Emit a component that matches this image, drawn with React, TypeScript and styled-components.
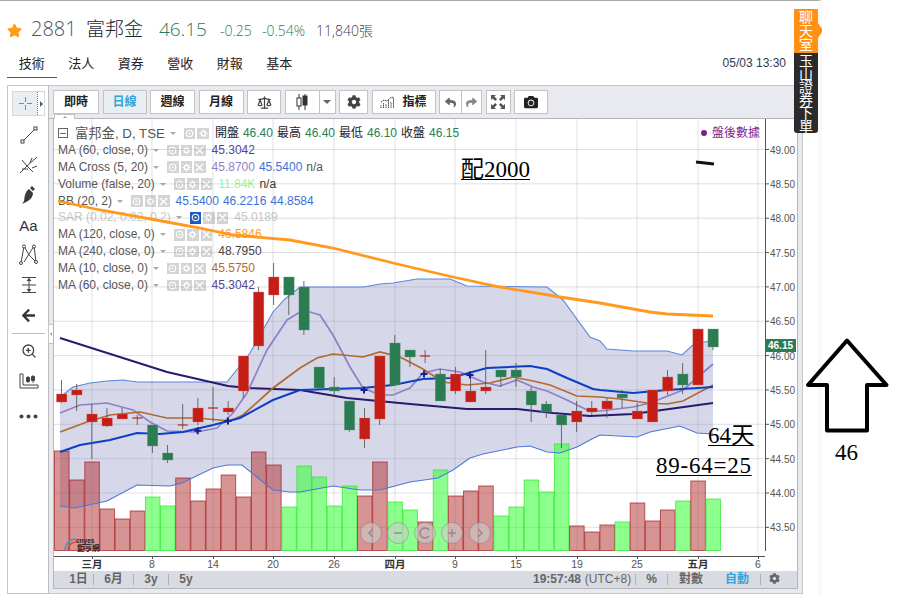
import React from "react";
import styled, { createGlobalStyle } from "styled-components";
import { FaCamera, FaCog, FaReply, FaShare, FaArrowLeft, FaStar } from "react-icons/fa";
import { ZoomIn, Scale } from "lucide-react";

const Global = createGlobalStyle`
  html, body { margin: 0; padding: 0; background: #fff; }
  #root { width: 900px; height: 600px; overflow: hidden; }
  * { box-sizing: border-box; }
`;

const SANS = `"Liberation Sans", "Noto Sans CJK TC", sans-serif`;
const HEAD = `"Open Sans", "Noto Sans CJK TC", sans-serif`;
const SERIF = `"Liberation Serif", "Noto Sans CJK TC", serif`;

const Root = styled.div`
  position: relative;
  width: 900px;
  height: 600px;
  overflow: hidden;
  background: #fff;
`;
const Page = styled.div`
  width: 822px;
  height: 594px;
  border-top: 1px solid #a9a9a9;
  border-right: 4px solid #f9f9f9;
  padding-left: 7px;
  font-family: ${SANS};
`;
const Quote = styled.div`
  display: flex;
  align-items: baseline;
  height: 37px;
  padding-top: 16px;
  font-family: ${HEAD};
  color: #3a4356;
  white-space: nowrap;
`;
const Star = styled.span`
  color: #ff9c1a;
  font-size: 15px;
  width: 24px;
  line-height: 20px;
  svg { display: block; transform: translateY(2px); }
`;
const Code = styled.span`
  font-size: 20px;
  font-weight: 300;
  line-height: 24px;
  color: #4a5568;
  width: 55px;
`;
const Name = styled.span`
  font-size: 19px;
  line-height: 24px;
  color: #1c2333;
  width: 73px;
  font-weight: 300;
`;
const Last = styled.span`
  font-size: 19px;
  line-height: 24px;
  color: #2b7a5c;
  width: 61px;
  font-weight: 300;
`;
const Small = styled.span<{ $w: number; $c?: string }>`
  font-size: 14px;
  color: ${(p) => p.$c || "#2b7a5c"};
  width: ${(p) => p.$w}px;
  font-weight: 300;
`;
const NavRow = styled.div`
  display: flex;
  align-items: flex-start;
  height: 47px;
  padding-top: 13px;
`;
const NavItem = styled.div<{ $active?: boolean }>`
  width: 49.5px;
  height: 27px;
  text-align: center;
  font: 400 13px/25px ${HEAD};
  color: #222;
  border-bottom: ${(p) => (p.$active ? "1px solid #c8232c" : "none")};
`;
const Stamp = styled.div`
  margin-left: auto;
  margin-right: 32px;
  font: 12px/25px ${SANS};
  color: #2f3b52;
`;
const Frame = styled.div`
  display: flex;
  width: 796px;
  height: 509px;
  border: 1px solid #c6c6c6;
`;
const LeftBar = styled.div`
  width: 41px;
  flex: none;
  border-right: 1px solid #bdbdbd;
  padding: 5px 3px 0 4px;
  display: flex;
  flex-direction: column;
  align-items: center;
  background: #fff;
`;
const CrossBtn = styled.div`
  width: 33px;
  height: 25px;
  flex: none;
  display: flex;
  margin-bottom: 4px;
  background: #e9eef3;
  border: 1px solid #d4d8dc;
`;
const CrossIcon = styled.div`
  flex: 1;
  display: flex;
  align-items: center;
  justify-content: center;
`;
const CrossSide = styled.div`
  width: 7px;
  border-left: 1px dotted #777;
  background: #fff;
  display: flex;
  align-items: center;
  justify-content: center;
  &::after {
    content: "";
    border-left: 3px solid #555;
    border-top: 3px solid transparent;
    border-bottom: 3px solid transparent;
  }
`;
const Tool = styled.div<{ $mt?: number }>`
  width: 32px;
  height: 30px;
  flex: none;
  margin-top: ${(p) => p.$mt || 0}px;
  display: flex;
  align-items: center;
  justify-content: center;
  color: #3c3c3c;
`;
const ToolText = styled.span`
  font: 15px ${SANS};
  color: #333;
`;
const ToolSep = styled.div`
  width: 33px;
  height: 1px;
  flex: none;
  margin-top: 3px;
  margin-bottom: 2px;
  background: #bdbdbd;
`;
const Right = styled.div`
  flex: 1;
  min-width: 0;
  display: flex;
  flex-direction: column;
  background: #e8eaef;
`;
const TopBar = styled.div`
  height: 33px;
  flex: none;
  border-bottom: 1px solid #b4b6bb;
  padding: 4px 0 0 4px;
  display: flex;
  gap: 3.5px;
`;
const Btn = styled.div<{ $w: number; $active?: boolean; $ml?: number }>`
  width: ${(p) => p.$w}px;
  height: 24px;
  flex: none;
  margin-left: ${(p) => p.$ml || 0}px;
  display: flex;
  align-items: center;
  justify-content: center;
  gap: 6px;
  background: ${(p) => (p.$active ? "#e9eef2" : "#fff")};
  border: 1px solid #c3c3c3;
  font: 700 12px/1 ${SANS};
  color: ${(p) => (p.$active ? "#2ea6dc" : "#222")};
`;
const Split = styled.div`
  display: flex;
  flex: none;
`;
const SplitPart = styled(Btn)<{ $left?: boolean }>`
  border-right: ${(p) => (p.$left ? "none" : "1px solid #c3c3c3")};
`;
const Caret = styled.span`
  border-top: 4px solid #666;
  border-left: 4px solid transparent;
  border-right: 4px solid transparent;
`;
const Body = styled.div`
  flex: 1;
  display: flex;
  min-height: 0;
`;
const Gutter = styled.div`
  position: relative;
  width: 4px;
  flex: none;
`;
const Handle = styled.div`
  position: absolute;
  left: -1px;
  top: 205px;
  width: 5px;
  height: 20px;
  background: #fff;
  border: 1px solid #c6c6c6;
  border-right: none;
  display: flex;
  align-items: center;
  justify-content: center;
  &::after {
    content: "";
    border-right: 2px solid #999;
    border-top: 2px solid transparent;
    border-bottom: 2px solid transparent;
  }
`;
const ChartCol = styled.div`
  width: 745px;
  flex: none;
  display: flex;
  flex-direction: column;
  border-left: 1px solid #b4b6bb;
  border-right: 1px solid #b4b6bb;
  margin-bottom: 4px;
  border-bottom: 1px solid #b4b6bb;
`;
const Chart = styled.div`
  position: relative;
  width: 743px;
  height: 452px;
  flex: none;
  background: #fff;
`;
const UpTab = styled.div`
  position: absolute;
  left: 0;
  top: -5px;
  width: 21px;
  height: 5px;
  background: #fff;
  border: 1px solid #c3c3c3;
  border-bottom: none;
  display: flex;
  justify-content: center;
  align-items: center;
  &::after {
    content: "";
    border-bottom: 2px solid #999;
    border-left: 2px solid transparent;
    border-right: 2px solid transparent;
  }
`;
const ChartSvg = styled.svg`
  position: absolute;
  inset: 0;
`;
const Legend = styled.div`
  position: absolute;
  left: 4px;
  top: 6px;
  font: 12px/17px ${SANS};
  color: #555;
`;
const Row = styled.div<{ $faded?: boolean }>`
  display: flex;
  align-items: center;
  height: 16.9px;
  white-space: nowrap;
  color: ${(p) => (p.$faded ? "#c8c8c8" : "#555")};
`;
const Collapse = styled.span`
  width: 10px;
  height: 10px;
  border: 1px solid #666;
  margin-right: 7px;
  display: flex;
  align-items: center;
  justify-content: center;
  &::after { content: ""; width: 6px; height: 1px; background: #666; }
`;
const TitleText = styled.span`
  font-size: 13.3px;
  color: #555;
`;
const RowCaret = styled.span`
  border-top: 3px solid #aaa;
  border-left: 3px solid transparent;
  border-right: 3px solid transparent;
  margin: 0 6px 0 5px;
`;
const Boxes = styled.span`
  display: flex;
  gap: 2px;
  margin-left: 2px;
  margin-right: 6px;
`;
const Box = styled.span<{ $on?: boolean }>`
  width: 11.5px;
  height: 11.5px;
  display: flex;
  align-items: center;
  justify-content: center;
  background: ${(p) => (p.$on ? "#1a5bc4" : "#d4d4d4")};
`;
const Val = styled.span<{ $c?: string }>`
  color: ${(p) => p.$c || "inherit"};
  margin-right: 4px;
`;
const OhlcLabel = styled.span`
  color: #222;
  margin-right: 4px;
`;
const AfterHours = styled.div`
  position: absolute;
  right: 37px;
  top: 7px;
  font: 12px/15px ${SANS};
  color: #7f1f8f;
  &::before {
    content: "";
    display: inline-block;
    width: 6px;
    height: 6px;
    border-radius: 50%;
    background: #7f1f8f;
    margin-right: 5px;
    vertical-align: 1px;
  }
`;
const BottomBar = styled.div`
  height: 17px;
  flex: none;
  background: #d8dbe1;
  display: flex;
  align-items: center;
  justify-content: space-between;
  font: 700 12px/17px ${SANS};
  color: #666;
`;
const BarGroup = styled.div`
  display: flex;
  align-items: center;
  padding: 0 10px;
`;
const BarItem = styled.span<{ $w?: number; $c?: string; $weight?: number }>`
  width: ${(p) => (p.$w ? p.$w + "px" : "auto")};
  text-align: center;
  color: ${(p) => p.$c || "#666"};
  font-weight: ${(p) => p.$weight || 700};
`;
const BarSep = styled.span`
  width: 1px;
  height: 11px;
  background: #aeb1b7;
`;
const SideTabs = styled.div`
  position: absolute;
  left: 794px;
  top: 9px;
  width: 24px;
  color: #fff;
  font: 14px/14px "Noto Sans CJK TC", sans-serif;
`;
const TabOrange = styled.div`
  position: relative;
  width: 24px;
  height: 44px;
  background: #ff9214;
  writing-mode: vertical-rl;
  display: flex;
  align-items: center;
  justify-content: center;
  &::after {
    content: "";
    position: absolute;
    left: 24px;
    top: 14px;
    width: 4px;
    height: 15px;
    background: #ff9214;
    clip-path: polygon(0 0, 100% 40%, 100% 60%, 0 100%);
  }
`;
const TabDark = styled.div`
  width: 24px;
  height: 80px;
  background: #2b2b2b;
  border-radius: 0 0 3px 3px;
  writing-mode: vertical-rl;
  letter-spacing: -1.1px;
  display: flex;
  align-items: center;
  justify-content: center;
`;
const Note = styled.div<{ $x: number; $y: number; $under?: boolean; $ls?: number }>`
  position: absolute;
  left: ${(p) => p.$x}px;
  top: ${(p) => p.$y}px;
  font: 23px/26px ${SERIF};
  color: #000;
  white-space: nowrap;
  letter-spacing: ${(p) => p.$ls || 0}px;
  text-decoration: ${(p) => (p.$under ? "underline" : "none")};
  text-decoration-thickness: 1px;
  text-underline-offset: 2px;
`;
const Arrow = styled.svg`
  position: absolute;
  left: 800px;
  top: 334px;
`;

/* ---------- data ---------- */
const step = 15.15;
const yPrice = (p: number) => 149.5 + (49 - p) * 68.7;
const vols: [number, "r" | "g"][] = [
  [451, "r"], [480, "r"], [462, "r"], [509, "r"], [519, "r"], [511, "r"], [497, "g"], [506, "g"], [478, "r"], [501, "r"], [489, "r"],
  [475, "r"], [497, "r"], [452, "r"], [465, "r"], [507, "g"], [466, "g"], [477, "g"], [506, "g"], [486, "g"], [496, "r"], [462, "r"],
  [502, "g"], [510, "g"], [522, "r"], [470, "g"], [496, "r"], [491, "r"], [486, "r"], [516, "g"], [507, "g"], [480, "g"], [492, "g"],
  [444, "g"], [526, "r"], [532, "r"], [525, "r"], [522, "g"], [503, "r"], [521, "r"], [510, "r"], [501, "g"], [481, "r"], [499, "g"],
];
const candles: [number, number, number, number, "r" | "g"][] = [
  [394, 402, 380, 403, "r"], [390, 395, 384, 411, "r"], [414, 422, 404, 459, "r"], [418, 426, 408, 427, "r"], [414, 419, 408, 419, "r"],
  [418, 418.6, 415, 425, "r"], [425, 446, 425, 453, "g"], [453, 460, 445, 463, "g"], [425, 425.6, 404, 429, "r"], [408, 422, 398, 425, "r"],
  [408, 408.6, 387, 422, "r"], [408, 412, 401, 415, "r"], [356, 391, 356, 398, "r"], [292, 346, 287, 350, "r"], [277, 295, 263, 305, "r"],
  [277, 295, 277, 315, "g"], [287, 330, 281, 335, "g"], [367, 388, 367, 390, "g"], [387, 391, 377, 397, "g"], [401, 430, 401, 432, "g"],
  [418, 439, 408, 448, "r"], [356, 419, 356, 425, "r"], [343, 385, 335, 385, "g"], [350, 357, 350, 367, "g"], [356, 356.6, 350, 363, "r"],
  [374, 401, 369, 401, "g"], [374, 391, 367, 394, "r"], [391, 402, 377, 402, "r"], [387, 391, 350, 394, "r"], [370, 377, 370, 387, "g"],
  [370, 377, 363, 387, "g"], [391, 405, 387, 422, "g"], [404, 412, 401, 418, "g"], [415, 425, 415, 448, "g"], [411, 422, 401, 432, "r"],
  [408, 412, 401, 415, "r"], [401, 409, 398, 418, "r"], [394, 398, 390, 408, "g"], [411, 419, 403, 419, "r"], [390, 422, 390, 422, "r"],
  [377, 391, 370, 395, "r"], [374, 385, 363, 394, "g"], [329, 385, 329, 385, "r"], [329, 347, 329, 350, "g"],
];
const upper = "60,397 73,387 90,383 107,381 123,380 137,382 167,382 227,382 250,353 273,312 285,299 300,287 363,287 380,284 393,283 417,279 450,279 467,286 547,287 563,300 590,337 600,341 607,349 633,351 667,351 682,355 695,343 713,341";
const lower = "713,434 697,433 680,426 650,432 637,437 600,435 590,440 577,447 560,453 547,452 530,446 517,447 483,454 470,458 453,470 438,478 410,482 380,490 360,490 333,486 300,492 290,492 273,490 242,465 227,465 213,468 182,483 170,486 137,485 107,501 75,508 60,506";
const navy = "60,338 167,372 228,386 248,388 300,390 347,398 410,404 467,409 517,409 553,413 590,416 633,414 713,403";
const blue = "60,452 80,445 110,440 137,433 160,434 183,432 213,425 240,418 273,400 300,390 363,388 393,385 423,379 450,378 487,368 530,366 547,369 567,378 593,389 600,390 633,393 667,390 713,387";
const brown = "60,432 87,422 110,415 140,412 167,418 197,418 230,421 243,415 273,388 300,368 317,358 333,354 363,357 380,352 400,357 423,369 443,382 467,385 490,383 513,377 533,381 550,385 577,396 600,397 620,399 647,403 667,404 683,401 713,385";
const lilac = "60,413 80,405 107,403 133,410 150,422 167,431 197,432 217,428 233,413 247,393 267,350 287,320 300,312 310,312 320,315 333,335 350,367 363,388 380,395 393,395 410,388 423,373 440,369 460,372 483,382 500,386 517,380 533,387 547,391 567,400 587,410 600,411 633,407 650,403 683,390 713,364";
const orange = "58,201 100,210 167,222 200,228 233,235 290,240 333,248 393,263 453,277 500,287 560,297 600,303 633,309 650,312 667,314 713,316";

const xTicks: [number, string, boolean][] = [
  [92, "三月", true], [152, "8", false], [213, "14", false], [273, "20", false], [334, "26", false], [395, "四月", true],
  [455, "9", false], [516, "15", false], [577, "19", false], [637, "25", false], [698, "五月", true], [758, "6", false],
];
const prices = [49, 48.5, 48, 47.5, 47, 46.5, 46, 45.5, 45, 44.5, 44, 43.5];
const sarMarks: [number, number][] = [[197.7, 430.7], [228, 421], [364, 390], [424, 374], [470, 375]];

const RED = "#c41e16";
const GREEN = "#2b7c50";

const PriceChart = () => (
  <ChartSvg width={743} height={452} viewBox="54 119 743 452">
    <polygon points={`${upper} ${lower}`} fill="#d6d8ea" />
    {xTicks.map(([x]) => (
      <line key={x} x1={x} x2={x} y1={119} y2={551} stroke="#7c7c92" strokeOpacity={0.24} />
    ))}
    {prices.map((p) => (
      <line key={p} x1={54} x2={765} y1={yPrice(p)} y2={yPrice(p)} stroke="#7c7c92" strokeOpacity={0.24} />
    ))}
    {vols.map(([top, c], i) => (
      <rect
        key={i}
        x={54 + step * i + 0.5}
        y={top}
        width={step - 0.6}
        height={550.5 - top}
        fill={c === "r" ? "rgba(180,60,60,.55)" : "rgba(40,255,40,.53)"}
        stroke={c === "r" ? "rgba(165,30,30,.7)" : "rgba(30,230,30,.65)"}
      />
    ))}
    <polyline points={upper} fill="none" stroke="#5b86dc" strokeWidth={1.1} />
    <polyline points={lower} fill="none" stroke="#4d78d8" strokeWidth={1.1} />
    <polyline points={navy} fill="none" stroke="#2a1a6e" strokeWidth={2} />
    <polyline points={lilac} fill="none" stroke="#8f7fc6" strokeWidth={1.7} />
    <polyline points={brown} fill="none" stroke="#b06a30" strokeWidth={1.7} />
    <polyline points={blue} fill="none" stroke="#0c3fc4" strokeWidth={2} />
    <polyline points={orange} fill="none" stroke="#ff9a1f" strokeWidth={2.8} />
    {candles.map(([t, b, wt, wb, c], i) => {
      const cx = 61.5 + step * i;
      const doji = b - t < 1;
      return (
        <g key={i}>
          <line x1={cx} x2={cx} y1={wt} y2={wb} stroke="#555" strokeOpacity={0.85} />
          {doji ? (
            <line x1={cx - 5} x2={cx + 5} y1={t} y2={t} stroke={RED} strokeWidth={1.2} />
          ) : (
            <rect x={cx - 5} y={t} width={10.4} height={b - t} fill={c === "r" ? RED : GREEN} stroke={c === "r" ? "#d8706a" : "#6aa285"} strokeOpacity={0.6} strokeWidth={0.6} />
          )}
        </g>
      );
    })}
    {sarMarks.map(([x, y]) => (
      <path key={x} d={`M${x - 3.5} ${y}H${x + 3.5}M${x} ${y - 3.5}V${y + 3.5}`} stroke="#1c1f8a" strokeWidth={2} />
    ))}
    <path d="M696 162L714 164" stroke="#111" strokeWidth={3.2} />

    {/* axes */}
    <line x1={765.5} x2={765.5} y1={119} y2={551} stroke="#555" />
    <line x1={54} x2={765} y1={556.5} y2={556.5} stroke="#555" />
    {prices.map((p) => (
      <g key={p}>
        <line x1={765} x2={769} y1={yPrice(p)} y2={yPrice(p)} stroke="#555" />
        <text x={770} y={yPrice(p) + 4} fontSize={10} fontFamily={SANS} fill="#555">{p.toFixed(2)}</text>
      </g>
    ))}
    {xTicks.map(([x, t, b]) => (
      <g key={x}>
        <line x1={x + 0.5} x2={x + 0.5} y1={556} y2={559} stroke="#555" />
        <text x={x} y={568} fontSize={10.5} fontWeight={b ? 700 : 400} fontFamily={SANS} fill={b ? "#333" : "#555"} textAnchor="middle">{t}</text>
      </g>
    ))}
    <rect x={765} y={339} width={31} height={13} fill={GREEN} />
    <text x={780.5} y={349} fontSize={10} fontWeight={700} fontFamily={SANS} fill="#fff" textAnchor="middle">46.15</text>

    {/* zoom controls */}
    {[371, 398, 425, 452, 480].map((x) => (
      <circle key={x} cx={x} cy={533} r={10.5} fill="rgba(205,205,205,.6)" stroke="rgba(120,120,120,.45)" />
    ))}
    <g fill="none" stroke="#8a8a8a" strokeWidth={1.4}>
      <path d="M373 529l-4 4 4 4" />
      <path d="M394 533h8" />
      <path d="M429 530a5 5 0 1 0 0 6" />
      <path d="M448 533h8M452 529v8" />
      <path d="M478 529l4 4-4 4" />
    </g>

    {/* logo */}
    <g fill="none" strokeWidth={1.5}>
      <path d="M65 550a11 11 0 0 1 11-11" stroke="#3a9ac8" />
      <path d="M68 550a8 8 0 0 1 8-8" stroke="#e24a2a" />
    </g>
    <text x={76} y={543} fontSize={6.5} fontWeight={700} fontFamily={SANS} fill="#222">cnyes</text>
    <text x={77} y={550.5} fontSize={7.5} fontWeight={700} fontFamily={SANS} fill="#222">鉅亨網</text>
  </ChartSvg>
);

const Eye = ({ c = "#fff" }: { c?: string }) => (
  <svg width="9" height="9" viewBox="0 0 10 10"><circle cx="5" cy="5" r="3.6" fill="none" stroke={c} strokeWidth="1.3" /><circle cx="5" cy="5" r="1.2" fill={c} /></svg>
);
const Cog = () => (
  <svg width="9" height="9" viewBox="0 0 10 10"><circle cx="5" cy="5" r="2.4" fill="none" stroke="#fff" strokeWidth="1.6" /><path d="M5 .5v1.6M5 7.9v1.6M.5 5h1.6M7.9 5h1.6M1.8 1.8l1.1 1.1M7.1 7.1l1.1 1.1M1.8 8.2l1.1-1.1M7.1 2.9l1.1-1.1" stroke="#fff" strokeWidth="1.1" /></svg>
);
const Cross = () => (
  <svg width="9" height="9" viewBox="0 0 10 10"><path d="M1 1l8 8M9 1l-8 8" stroke="#fff" strokeWidth="1.5" /></svg>
);

type Study = { name: string; vals: [string, string?][]; faded?: boolean; on?: boolean };
const studies: Study[] = [
  { name: "MA (60, close, 0)", vals: [["45.3042", "#4f4295"]] },
  { name: "MA Cross (5, 20)", vals: [["45.8700", "#8f7fc6"], ["45.5400", "#3a73d8"], ["n/a", "#555"]] },
  { name: "Volume (false, 20)", vals: [["11.84K", "#8cff8c"], ["n/a", "#333"]] },
  { name: "BB (20, 2)", vals: [["45.5400", "#3a73d8"], ["46.2216", "#3a73d8"], ["44.8584", "#3a73d8"]] },
  { name: "SAR (0.02, 0.02, 0.2)", vals: [["45.0189", "#c8c8c8"]], faded: true, on: true },
  { name: "MA (120, close, 0)", vals: [["46.5846", "#ff9a1f"]] },
  { name: "MA (240, close, 0)", vals: [["48.7950", "#444"]] },
  { name: "MA (10, close, 0)", vals: [["45.5750", "#b8692e"]] },
  { name: "MA (60, close, 0)", vals: [["45.3042", "#4f4295"]] },
];

const ChartLegend = () => (
  <Legend>
    <Row>
      <Collapse />
      <TitleText>富邦金, D, TSE</TitleText>
      <RowCaret />
      <Boxes>
        <Box><Eye /></Box>
        <Box><Cog /></Box>
      </Boxes>
      <OhlcLabel>開盤</OhlcLabel><Val $c="#2b8050">46.40</Val>
      <OhlcLabel>最高</OhlcLabel><Val $c="#2b8050">46.40</Val>
      <OhlcLabel>最低</OhlcLabel><Val $c="#2b8050">46.10</Val>
      <OhlcLabel>收盤</OhlcLabel><Val $c="#2b8050">46.15</Val>
    </Row>
    {studies.map((s, i) => (
      <Row key={i} $faded={s.faded}>
        <span>{s.name}</span>
        <RowCaret />
        <Boxes>
          <Box $on={s.on}><Eye /></Box>
          <Box><Cog /></Box>
          <Box><Cross /></Box>
        </Boxes>
        {s.vals.map(([v, c], j) => (
          <Val key={j} $c={c}>{v}</Val>
        ))}
      </Row>
    ))}
  </Legend>
);

const ToolBarIcons = {
  Candle: () => (
    <svg width="14" height="18" viewBox="0 0 14 18"><path d="M4 1v16M10 1v16" stroke="#333" /><rect x="2" y="5" width="4" height="8" fill="#fff" stroke="#333" /><rect x="8" y="3" width="4" height="9" fill="#333" stroke="#333" /></svg>
  ),
  Bars: () => (
    <svg width="16" height="13" viewBox="0 0 16 13" stroke="#444" fill="none" strokeWidth="1"><path d="M1 12V9M3.5 12V7M6 12V8M8.5 12V4M11 12V6M13.5 12V2M1 6l3-2 3 1 3-3 4-1" strokeDasharray="1.5 .6" /></svg>
  ),
  Full: () => (
    <svg width="16" height="16" viewBox="0 0 16 16" fill="#555"><path d="M1 1h5L4.4 2.6 7 5.2 5.2 7 2.6 4.4 1 6zM15 1v5l-1.6-1.6L10.8 7 9 5.2l2.6-2.6L10 1zM1 15v-5l1.6 1.6L5.2 9 7 10.8l-2.6 2.6L6 15zM15 15h-5l1.6-1.6L9 10.8 10.8 9l2.6 2.6L15 10z" /></svg>
  ),
};

export default function App() {
  return (
    <Root>
      <Global />
      <Page>
        <Quote>
          <Star><FaStar size={15} /></Star>
          <Code>2881</Code>
          <Name>富邦金</Name>
          <Last>46.15</Last>
          <Small $w={42}>-0.25</Small>
          <Small $w={54}>-0.54%</Small>
          <Small $w={70} $c="#3a4356">11,840張</Small>
        </Quote>
        <NavRow>
          <NavItem $active>技術</NavItem>
          <NavItem>法人</NavItem>
          <NavItem>資券</NavItem>
          <NavItem>營收</NavItem>
          <NavItem>財報</NavItem>
          <NavItem>基本</NavItem>
          <Stamp>05/03 13:30</Stamp>
        </NavRow>
        <Frame>
          <LeftBar>
            <CrossBtn>
              <CrossIcon>
                <svg width="13" height="13" viewBox="0 0 13 13"><path d="M6.5 0v5M6.5 8v5M0 6.5h5M8 6.5h5" stroke="#2ea6dc" /></svg>
              </CrossIcon>
              <CrossSide />
            </CrossBtn>
            <Tool>
              <svg width="18" height="18" viewBox="0 0 18 18" fill="none" stroke="#444"><path d="M3.5 14.5L14.5 3.5" /><rect x="1" y="14" width="3" height="3" /><rect x="14" y="1" width="3" height="3" /></svg>
            </Tool>
            <Tool>
              <svg width="20" height="20" viewBox="0 0 20 20" fill="none" stroke="#444"><path d="M1 18L8 11M8 11l10-9M8 11L3 5M8 11l6 6M11 8l2-5M13 13l5-2M3 14h6" /></svg>
            </Tool>
            <Tool>
              <svg width="18" height="20" viewBox="0 0 18 20" fill="#3c3c3c"><path d="M12 1l3 3-2 2-3-3zM9 4l4 4c0 4-3 8-11 11 3-3 2-6 3-9 1-3 2-5 4-6z" /></svg>
            </Tool>
            <Tool><ToolText>Aa</ToolText></Tool>
            <Tool>
              <svg width="20" height="22" viewBox="0 0 20 22" fill="none" stroke="#444"><path d="M5 2L2 19M5 2l5 9 7 7M15 2l2 16M15 2L5 18" /><circle cx="5" cy="2.5" r="1.5" fill="#fff" /><circle cx="15" cy="2.5" r="1.5" fill="#fff" /><circle cx="2" cy="19" r="1.5" fill="#fff" /><circle cx="17" cy="18" r="1.5" fill="#fff" /></svg>
            </Tool>
            <Tool>
              <svg width="18" height="18" viewBox="0 0 18 18" fill="none" stroke="#444"><path d="M2 1.5h14M2 9h14M2 16.5h14" /><path d="M9 2.5v13" /><path d="M7 5l2-2.5L11 5M7 13l2 2.5 2-2.5" fill="#444" /></svg>
            </Tool>
            <Tool><FaArrowLeft size={15} color="#333" /></Tool>
            <ToolSep />
            <Tool><ZoomIn size={16} color="#444" strokeWidth={2} /></Tool>
            <Tool>
              <svg width="20" height="16" viewBox="0 0 20 16" fill="none" stroke="#444"><path d="M1 1v14h18v-3H4V1z" /><path d="M9 3v7M14 2v8" /><path d="M7.5 4.5h3v4h-3zM12.5 3.5h3v4h-3z" fill="#444" /></svg>
            </Tool>
            <Tool $mt={5}>
              <svg width="19" height="5" viewBox="0 0 19 5" fill="#444"><circle cx="2.5" cy="2.5" r="2" /><circle cx="9.5" cy="2.5" r="2" /><circle cx="16.5" cy="2.5" r="2" /></svg>
            </Tool>
          </LeftBar>
          <Right>
            <TopBar>
              <Btn $w={46}>即時</Btn>
              <Btn $w={44} $active>日線</Btn>
              <Btn $w={45}>週線</Btn>
              <Btn $w={45}>月線</Btn>
              <Btn $w={34}><Scale size={15} color="#444" /></Btn>
              <Split>
                <SplitPart $w={34} $left><ToolBarIcons.Candle /></SplitPart>
                <SplitPart $w={17}><Caret /></SplitPart>
              </Split>
              <Btn $w={29}><FaCog size={14} color="#444" /></Btn>
              <Btn $w={64}><ToolBarIcons.Bars />指標</Btn>
              <Split>
                <SplitPart $w={22} $left><FaReply size={11} color="#666" /></SplitPart>
                <SplitPart $w={21}><FaShare size={11} color="#888" /></SplitPart>
              </Split>
              <Btn $w={25}><ToolBarIcons.Full /></Btn>
              <Btn $w={34}><FaCamera size={14} color="#222" /></Btn>
            </TopBar>
            <Body>
              <Gutter><Handle /></Gutter>
              <ChartCol>
                <Chart>
                  <UpTab />
                  <ChartLegend />
                  <PriceChart />
                  <AfterHours>盤後數據</AfterHours>
                </Chart>
                <BottomBar>
                  <BarGroup>
                    <BarItem $w={29}>1日</BarItem>
                    <BarSep />
                    <BarItem $w={39}>6月</BarItem>
                    <BarSep />
                    <BarItem $w={34}>3y</BarItem>
                    <BarSep />
                    <BarItem $w={34}>5y</BarItem>
                  </BarGroup>
                  <BarGroup>
                    <BarItem>19:57:48</BarItem>
                    <BarItem $w={54} $weight={400}>(UTC+8)</BarItem>
                    <BarSep />
                    <BarItem $w={31}>%</BarItem>
                    <BarSep />
                    <BarItem $w={46}>對數</BarItem>
                    <BarItem $w={46} $c="#2ea6dc">自動</BarItem>
                    <BarSep />
                    <BarItem $w={26}><FaCog size={11} style={{ verticalAlign: -1 }} /></BarItem>
                  </BarGroup>
                </BottomBar>
              </ChartCol>
            </Body>
          </Right>
        </Frame>
      </Page>
      <SideTabs>
        <TabOrange>聊天室</TabOrange>
        <TabDark>玉山證券下單</TabDark>
      </SideTabs>
      <Note $x={461} $y={157} $under>配2000</Note>
      <Note $x={708} $y={423} $under>64天</Note>
      <Note $x={656} $y={453} $ls={0.75} $under>89-64=25</Note>
      <Note $x={835} $y={440}>46</Note>
      <Arrow width={92} height={102} viewBox="800 334 92 102">
        <path d="M847 340.5L808 385H827V430.5H867V385H886.5Z" fill="none" stroke="#000" strokeWidth={4} strokeLinejoin="round" />
      </Arrow>
    </Root>
  );
}
